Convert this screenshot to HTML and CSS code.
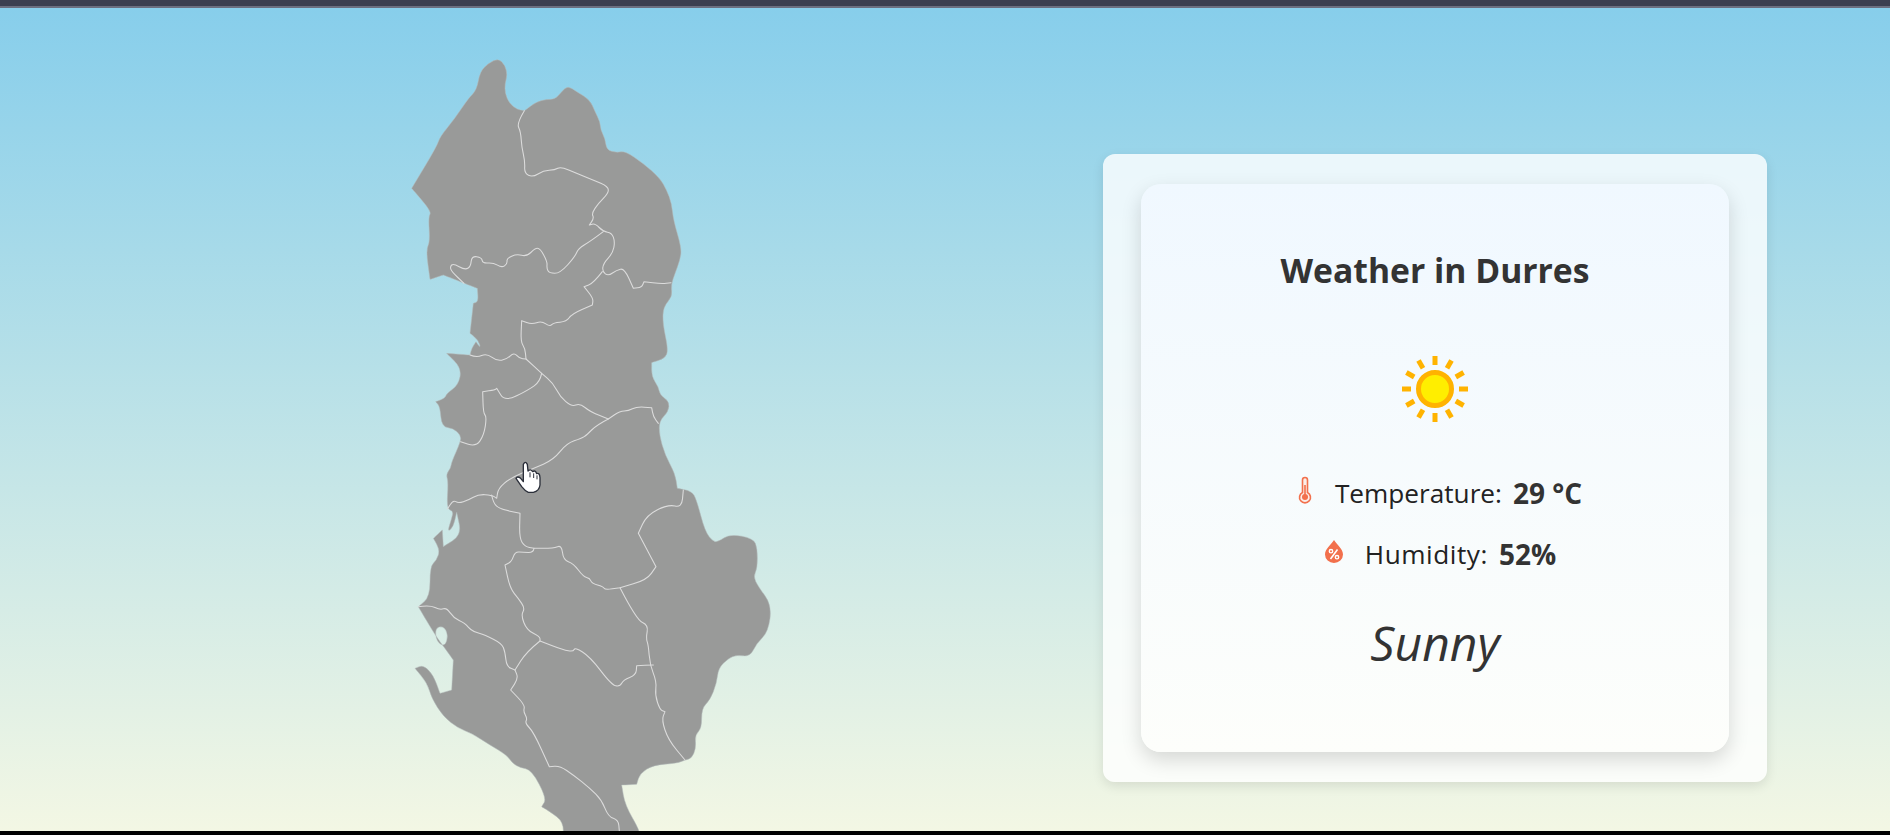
FILE: index.html
```html
<!DOCTYPE html>
<html>
<head>
  <link rel="stylesheet" href="styles.css">
  <title>Albania Weather Map</title>
</head>
<body>
  <div class="top-bar"></div>
  <div class="main">
    <svg class="map" viewBox="0 0 1200 2373" width="400" height="791">
      <path class="land" fill-rule="evenodd" d="M325 55 L345 75 L352 105 L345 130 L345 160 L358 190 L380 208 L403 212 L403 212 L440 185 L470 178 L495 178 L515 155 L533 137 L560 155 L600 180 L615 215 L630 245 L632 270 L645 295 L650 330 L680 338 L705 333 L760 370 L810 415 L830 450 L845 490 L850 540 L875 625 L870 660 L855 700 L843 735 L847 770 L820 800 L818 850 L835 930 L825 955 L785 968 L785 968 L785 1010 L805 1040 L810 1065 L838 1085 L835 1115 L808 1143 L808 1185 L825 1245 L855 1300 L862 1345 L862 1345 L905 1353 L920 1380 L945 1475 L970 1505 L985 1505 L1020 1482 L1090 1495 L1102 1525 L1102 1585 L1090 1610 L1105 1640 L1145 1695 L1135 1775 L1100 1810 L1080 1850 L1040 1845 L1015 1855 L985 1885 L980 1930 L960 1980 L935 2005 L935 2065 L915 2085 L918 2125 L905 2155 L885 2160 L860 2170 L790 2175 L750 2200 L740 2233 L740 2233 L695 2235 L695 2235 L705 2295 L750 2373 L750 2400 L520 2400 L520 2345 L480 2315 L455 2300 L455 2300 L470 2275 L425 2190 L390 2183 L368 2170 L350 2145 L300 2115 L245 2080 L205 2065 L160 2030 L125 1975 L112 1930 L75 1885 L75 1885 L100 1875 L130 1905 L150 1960 L150 1960 L185 1950 L185 1950 L190 1860 L190 1860 L165 1825 L135 1785 L85 1700 L85 1700 L120 1670 L120 1580 L140 1560 L150 1530 L130 1495 L130 1495 L157 1470 L157 1470 L160 1520 L160 1520 L215 1485 L200 1417 L200 1417 L190 1460 L172 1477 L185 1435 L190 1413 L170 1407 L175 1325 L168 1303 L182 1285 L185 1265 L212 1205 L212 1185 L190 1165 L155 1160 L150 1100 L137 1085 L137 1085 L165 1075 L170 1060 L205 1035 L215 985 L170 940 L170 940 L240 945 L240 945 L245 925 L258 905 L258 905 L272 925 L265 900 L240 880 L240 880 L250 790 L250 790 L265 785 L262 745 L262 745 L160 705 L160 705 L120 718 L120 718 L108 630 L120 605 L115 530 L125 515 L65 445 L65 445 L140 320 L150 290 L195 235 L235 175 L260 150 L270 95 L295 70 Z M135 1765 L160 1757 L175 1785 L165 1820 L140 1805 Z"/>
      <g class="borders">
        <polyline points="403,212 380,250 392,275 395,320 405,365 403,400 428,412 460,392 495,390 512,380 560,400 610,420 655,440 655,460 625,490 605,520 612,535 598,555 598,555 615,550 640,575 665,578 675,605 668,640 640,670 637,695 655,708 680,690 703,685 730,745 730,745 755,742 762,725 762,725 815,732 843,728"/>
        <polyline points="640,575 600,605 565,625 555,650 510,700 478,700 470,685 472,665 450,625 435,625 410,650 380,642 350,655 352,672 335,683 310,668 278,670 275,652 245,648 242,680 225,690 190,670 180,680 185,695 222,730"/>
        <polyline points="637,695 610,730 582,740 582,740 610,775 607,795 607,795 545,822 530,845 490,848 480,860 455,843 425,853 395,842 395,842 392,905 405,925 408,957"/>
        <polyline points="240,945 260,953 290,940 320,963 350,958 372,937 388,955 408,957 408,957 455,1000 455,1000 490,1030 510,1070 545,1100 570,1090 600,1115 655,1137 655,1137 690,1113 715,1113 740,1100 785,1103 785,1103 790,1130 805,1150"/>
        <polyline points="455,1000 450,1025 415,1050 345,1085 320,1045 320,1045 315,1050 278,1055 278,1055 280,1120 290,1130 282,1185 258,1220 212,1205"/>
        <polyline points="655,1137 620,1155 590,1185 575,1195 530,1210 490,1260 430,1285 360,1315 325,1345 320,1375 320,1375 305,1365 265,1363 235,1380 205,1390 190,1380 172,1407"/>
        <polyline points="305,1365 310,1390 330,1407 390,1420 390,1420 388,1495 405,1520 432,1525 432,1525 490,1525 515,1515 520,1560 550,1570 580,1610 600,1615 605,1630 640,1640 645,1650 690,1643 690,1643 770,1620 798,1580 798,1580 745,1480 745,1480 770,1425 835,1393 875,1403 880,1350"/>
        <polyline points="432,1525 430,1538 400,1537 375,1535 365,1565 345,1575 345,1575 360,1645 385,1675 405,1705 393,1725 410,1770 450,1790 450,1803 450,1803 520,1830 550,1835 555,1822 600,1850 665,1935 690,1940 700,1920 738,1905 740,1877 740,1877 790,1875"/>
        <polyline points="690,1643 740,1740 775,1755 768,1795 775,1815 780,1875 800,1925 795,1965 810,2010 825,2015 825,2015 815,2040 835,2100 885,2160"/>
        <polyline points="85,1700 120,1695 150,1710 170,1703 190,1733 225,1750 235,1762 250,1775 285,1785 335,1810 345,1835 350,1880 375,1890 375,1890 385,1915 362,1950 362,1950 405,1995 400,2015 412,2035 405,2050 430,2075 478,2180 478,2180 510,2178 550,2205 600,2245 635,2280 655,2330 685,2340 688,2373"/>
        <polyline points="450,1803 410,1835 375,1890"/>
      </g>
      <g class="cursor">
        <path d="M400 1273 Q406 1261 412 1273 L414 1293 Q422 1285 428 1295 Q436 1289 440 1301 Q449 1297 450 1313 L450 1335 Q448 1353 430 1357 L415 1357 Q405 1353 395 1340 L378 1315 Q382 1307 392 1315 L400 1325 Z"/>
        <polyline points="420,1297 420,1312"/>
        <polyline points="431,1300 431,1314"/>
        <polyline points="441,1306 441,1318"/>
      </g>
    </svg>

    <div class="weather-box">
      <div class="weather-card">
        <h2>Weather in Durres</h2>
        <svg class="sun" viewBox="0 0 72 72" width="72" height="72">
          <g class="rays">
            <line x1="36" y1="3" x2="36" y2="12"/>
            <line x1="36" y1="60" x2="36" y2="69"/>
            <line x1="3" y1="36" x2="12" y2="36"/>
            <line x1="60" y1="36" x2="69" y2="36"/>
            <line x1="19.5" y1="7.4" x2="24" y2="15.2"/>
            <line x1="48" y1="56.8" x2="52.5" y2="64.6"/>
            <line x1="52.5" y1="7.4" x2="48" y2="15.2"/>
            <line x1="24" y1="56.8" x2="19.5" y2="64.6"/>
            <line x1="7.4" y1="19.5" x2="15.2" y2="24"/>
            <line x1="56.8" y1="48" x2="64.6" y2="52.5"/>
            <line x1="64.6" y1="19.5" x2="56.8" y2="24"/>
            <line x1="15.2" y1="48" x2="7.4" y2="52.5"/>
          </g>
          <circle class="sun-core" cx="36" cy="36" r="16.5"/>
        </svg>
        <div class="info-row">
          <svg class="icon" viewBox="0 0 14 28" width="14" height="28">
            <path class="thermo" d="M4.5 16.5 V4 a2.5 2.5 0 0 1 5 0 V16.5 a5.5 5.5 0 1 1 -5 0 Z"/>
            <circle class="thermo-dot" cx="7" cy="21" r="3"/>
            <rect class="thermo-dot" x="6.2" y="9" width="1.6" height="11"/>
          </svg>
          <span class="label">Temperature:</span>
          <span class="value">29 °C</span>
        </div>
        <div class="info-row humidity">
          <svg class="icon" viewBox="0 0 20 24" width="20" height="24">
            <path class="drop" d="M10 1 C13 6 19 10 19 15.5 A9 8.5 0 0 1 1 15.5 C1 10 7 6 10 1 Z"/>
            <circle class="drop-mark" cx="7" cy="12.2" r="1.7"/>
            <circle class="drop-mark" cx="13" cy="18.2" r="1.7"/>
            <line class="drop-line" x1="13.5" y1="10.5" x2="6.5" y2="20"/>
          </svg>
          <span class="label">Humidity:</span>
          <span class="value">52%</span>
        </div>
        <div class="condition">Sunny</div>
      </div>
    </div>
  </div>
  <div class="bottom-bar"></div>
  <script src="map.js"></script>
</body>
</html>
```

FILE: styles.css
```css
html, body {
  height: 100%;
}
body {
  margin: 0;
  display: flex;
  flex-direction: column;
  font-family: "Open Sans", "Noto Sans", sans-serif;
  color: #333;
  overflow: hidden;
}
.top-bar {
  height: 6px;
  background-color: #3b3f50;
  border-bottom: 2px solid #6b6f80;
}
.bottom-bar {
  height: 4px;
  background-color: #000;
}
.main {
  flex: 1;
  display: flex;
  align-items: flex-start;
  padding: 32px 123px 0 390px;
  background: linear-gradient(#87ceeb, #f3f7e4);
  overflow: hidden;
}
.map {
  flex-shrink: 0;
}
.land {
  fill: #999a99;
  stroke: #b5bcbc;
  stroke-width: 1.5;
  stroke-linejoin: round;
}
.borders path,
.borders polyline {
  fill: none;
  stroke: #dcdcdc;
  stroke-width: 3.2;
  stroke-linejoin: round;
  stroke-linecap: round;
}
.cursor path {
  fill: #fff;
  stroke: #2b2f3a;
  stroke-width: 4;
  stroke-linejoin: round;
}
.cursor polyline {
  fill: none;
  stroke: #2b2f3a;
  stroke-width: 3;
}
.weather-box {
  margin: 114px 0 0 auto;
  width: 664px;
  height: 628px;
  box-sizing: border-box;
  padding: 30px 38px;
  background-color: rgba(255, 255, 255, 0.8);
  border-radius: 12px;
  box-shadow: 0 4px 12px rgba(0, 0, 0, 0.1);
}
.weather-card {
  height: 568px;
  display: flex;
  flex-direction: column;
  align-items: center;
  background: linear-gradient(#f0f8ff, #fdfefb);
  border-radius: 20px;
  box-shadow: 0 8px 20px rgba(0, 0, 0, 0.15);
}
h2 {
  margin: 64px 0 0;
  font-size: 33.7px;
  line-height: 44px;
  font-weight: 700;
}
.sun {
  margin-top: 61px;
  filter: blur(0.4px);
}
.rays line {
  stroke: #ffb300;
  stroke-width: 5;
}
.sun-core {
  fill: #ffee00;
  stroke: #ffb300;
  stroke-width: 5;
}
.info-row {
  display: flex;
  align-items: center;
  margin-top: 48px;
  padding-left: 10px;
  height: 40px;
  font-size: 26.2px;
}
.humidity {
  margin-top: 21px;
}
.icon {
  margin-top: -6px;
  margin-right: 23px;
}
.humidity .icon {
  margin-right: 21px;
}
.humidity .label {
  letter-spacing: 0.55px;
}
.thermo {
  fill: #fbeee9;
  stroke: #f2704c;
  stroke-width: 1.6;
}
.thermo-dot {
  fill: #f2704c;
}
.drop {
  fill: #f2704c;
}
.drop-mark {
  fill: none;
  stroke: #fff;
  stroke-width: 1.4;
}
.drop-line {
  stroke: #fff;
  stroke-width: 1.6;
}
.label {
  margin-right: 11px;
  color: #222;
}
.value {
  font-size: 28px;
  font-weight: 700;
}
.condition {
  margin-top: 36px;
  font-size: 48px;
  font-style: italic;
}
```

FILE: map.js
```js
// round off the traced map lines with midpoint curves
function smooth(pts, closed) {
  const mid = (a, b) => [(a[0] + b[0]) / 2, (a[1] + b[1]) / 2];
  if (closed) {
    const start = mid(pts[pts.length - 1], pts[0]);
    let d = `M${start[0]} ${start[1]}`;
    pts.forEach((p, i) => {
      const m = mid(p, pts[(i + 1) % pts.length]);
      d += ` Q${p[0]} ${p[1]} ${m[0]} ${m[1]}`;
    });
    return d + " Z";
  }
  let d = `M${pts[0][0]} ${pts[0][1]}`;
  for (let i = 1; i < pts.length - 1; i++) {
    const m = mid(pts[i], pts[i + 1]);
    d += ` Q${pts[i][0]} ${pts[i][1]} ${m[0]} ${m[1]}`;
  }
  const last = pts[pts.length - 1];
  return d + ` L${last[0]} ${last[1]}`;
}

function toPoints(str) {
  const nums = str.match(/-?[\d.]+/g).map(Number);
  const pts = [];
  for (let i = 0; i < nums.length; i += 2) pts.push([nums[i], nums[i + 1]]);
  return pts;
}

const land = document.querySelector(".land");
const parts = land.getAttribute("d").split("M").filter(s => s.trim());
land.setAttribute("d", parts.map(s => smooth(toPoints(s), true)).join(" "));

document.querySelectorAll(".borders polyline").forEach(line => {
  const path = document.createElementNS("http://www.w3.org/2000/svg", "path");
  path.setAttribute("d", smooth(toPoints(line.getAttribute("points")), false));
  line.replaceWith(path);
});
```
